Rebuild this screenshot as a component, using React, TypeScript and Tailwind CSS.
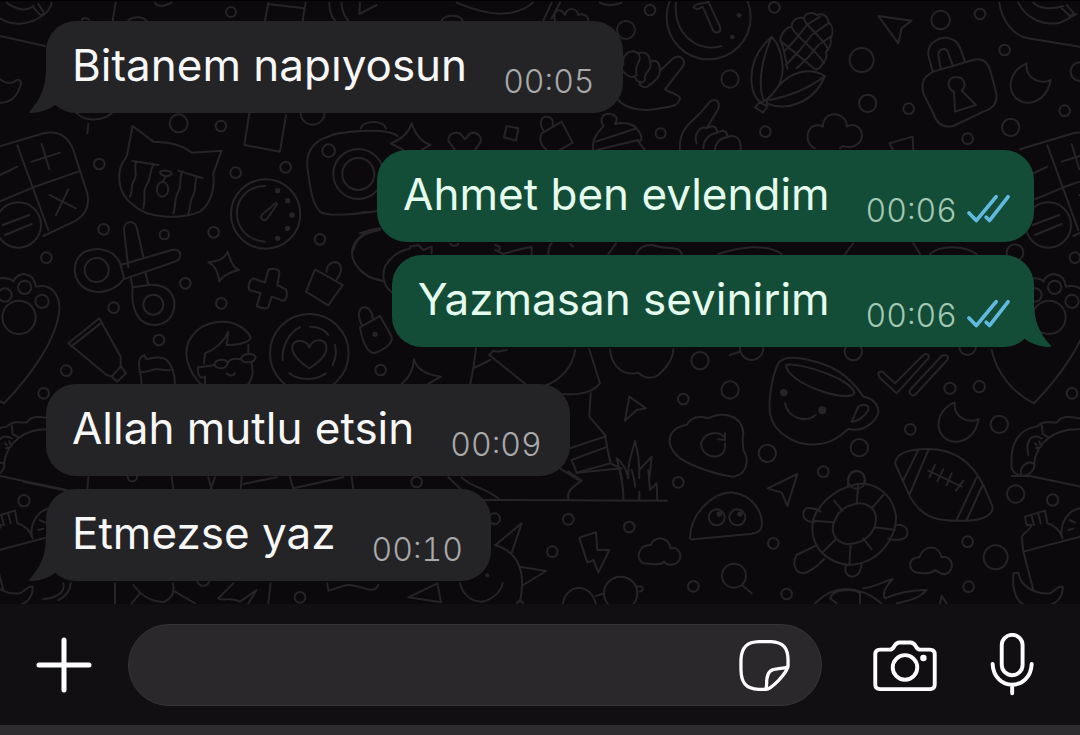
type Message = {
  text: string
  time: string
  mine?: boolean
  tail?: boolean
}

type Circle = [number, number, number]

type Tile = {
  x: number
  y: number
  d: string[]
  rings: Circle[]
  dots?: Circle[]
}

const messages: Message[] = [
  { text: 'Bitanem napıyosun', time: '00:05', tail: true },
  { text: 'Ahmet ben evlendim', time: '00:06', mine: true },
  { text: 'Yazmasan sevinirim', time: '00:06', mine: true, tail: true },
  { text: 'Allah mutlu etsin', time: '00:09' },
  { text: 'Etmezse yaz', time: '00:10', tail: true },
]

export default function App() {
  return (
    <main className="min-h-screen flex flex-col bg-[#0b090c] font-['Inter','Liberation_Sans',sans-serif] text-white">
      <section className="relative flex-1 overflow-hidden border-t border-black">
        <Wallpaper />
        <ul className="relative flex flex-col px-[46px] pt-5 pb-[22px]">
          {messages.map((message, i) => (
            <Bubble key={i} message={message} grouped={i > 0 && messages[i - 1].mine === message.mine} />
          ))}
        </ul>
      </section>
      <Composer />
      <div className="h-2.5 bg-[#2e2c2f]" />
    </main>
  )
}

function Bubble({ message, grouped }: { message: Message; grouped: boolean }) {
  const { text, time, mine, tail } = message
  return (
    <li className={`flex first:mt-0 ${grouped ? 'mt-[13px]' : 'mt-[37px]'} ${mine ? 'justify-end' : 'justify-start'}`}>
      <div
        className={`relative flex items-end rounded-[30px] pl-[26px] ${
          mine ? 'bg-[#144d37] pr-6' : 'bg-[#242427] pr-7'
        }`}
      >
        {tail && <Tail mine={mine} />}
        <p className={`relative pt-3.5 pb-[18px] text-[44px] leading-[60px] ${mine ? 'text-[#e4fbee]' : 'text-[#f7f7f8]'}`}>
          {text}
        </p>
        <time
          className={`ml-9 pb-[11px] text-[32px] leading-10 font-light tabular-nums ${mine ? 'text-[#a3c9b4]' : 'text-[#a9a9ab]'}`}
        >
          {time}
        </time>
        {mine && <ReadTicks />}
      </div>
    </li>
  )
}

function Tail({ mine = false }: { mine?: boolean }) {
  return (
    <svg
      viewBox="0 0 46 44"
      aria-hidden="true"
      className={`absolute bottom-0 h-11 w-[46px] ${
        mine ? '-right-[18px] fill-[#144d37]' : '-left-[18px] -scale-x-100 fill-[#242427]'
      }`}
    >
      <path d="M28 0C28 17 33 30 45 43C45 44 44 44 43 44C34 44 24 40 19 36L0 36L14 0Z" />
    </svg>
  )
}

function ReadTicks() {
  return (
    <svg
      viewBox="0 0 130 90"
      role="img"
      aria-label="Okundu"
      className="mb-[18px] ml-2.5 h-[30px] w-[43px] fill-none stroke-[#62b9de]"
      strokeWidth="11"
      strokeLinecap="round"
      strokeLinejoin="round"
    >
      <path d="M6 57L28 80L88 8M58 70L68 80L124 8" />
    </svg>
  )
}

function Composer() {
  return (
    <form className="flex items-center bg-[#110f12] pt-5 pb-[19px] pl-9 pr-[46px]" onSubmit={(e) => e.preventDefault()}>
      <button type="button" aria-label="Ekle">
        <svg viewBox="0 0 56 56" className="size-14 fill-none stroke-white" strokeWidth="5" strokeLinecap="round">
          <path d="M28 3V53M3 28H53" />
        </svg>
      </button>
      <div className="ml-9 flex h-[82px] min-w-0 flex-1 items-center rounded-full border border-[#363438] bg-[#2a282b] pl-8 pr-[31px]">
        <input
          type="text"
          aria-label="Mesaj"
          className="min-w-0 flex-1 bg-transparent text-[32px] leading-10 text-white outline-none"
        />
        <button type="button" aria-label="Çıkartma" className="ml-4">
          <svg
            viewBox="0 0 156 156"
            className="size-[51px] fill-none stroke-white"
            strokeWidth="10"
            strokeLinecap="round"
            strokeLinejoin="round"
          >
            <path d="M81 151H60C20 149 7 130 6 92V60C8 22 24 6 62 5H98C136 7 150 25 150 62V78C148 100 100 150 81 151Z" />
            <path d="M82 150C86 140 84 130 85 120C88 98 96 90 116 88C128 86 140 88 149 82" />
          </svg>
        </button>
      </div>
      <button type="button" aria-label="Kamera" className="ml-[51px]">
        <svg
          viewBox="0 0 198 156"
          className="h-[51px] w-16 fill-none stroke-white"
          strokeWidth="12"
          strokeLinecap="round"
          strokeLinejoin="round"
        >
          <path d="M22 29H52C60 29 62 24 66 18C71 9 74 7 82 7H116C124 7 127 9 132 18C136 24 138 29 146 29H176C186 29 191 34 191 44V137C191 147 186 151 176 151H22C12 151 7 147 7 137V44C7 34 12 29 22 29Z" />
          <circle cx="99" cy="84" r="38" />
          <circle cx="156" cy="55" r="10" className="fill-white stroke-none" />
        </svg>
      </button>
      <button type="button" aria-label="Sesli mesaj" className="ml-[53px]">
        <svg
          viewBox="0 0 135 195"
          className="h-16 w-11 fill-none stroke-white"
          strokeWidth="12"
          strokeLinecap="round"
        >
          <rect x="36" y="5" width="64" height="124" rx="32" />
          <path d="M8 94C10 136 38 158 68 158C98 158 126 136 128 94M68 158V184" />
        </svg>
      </button>
    </form>
  )
}

// Doodles are drawn on a 3x grid, one tile per patch of the wall
const tiles: Tile[] = [
  {
    x: 0,
    y: 0,
    d: [
      'M0 55C40 80 90 75 130 45C145 35 152 20 155 8M20 8C50 30 80 35 100 18M100 22L118 42C125 48 135 42 130 35L115 12M0 108L135 138',
      'M347 8L338 62M465 8C475 25 495 18 515 8M245 60C250 52 262 52 268 60M385 62C400 48 425 48 440 62',
      'M805 8L795 62M917 8L908 62M805 12L912 25M988 8C988 30 995 50 1005 62M1025 8C1025 30 1035 50 1045 62M1080 8L1078 42L1130 15',
      'M0 238C20 255 40 250 50 240C60 238 65 245 62 255C50 295 25 310 0 308M228 338C255 365 305 365 335 340M265 372L262 400',
      // cat with teary eyes
      'M398 378L460 425C500 425 540 430 575 458L665 452L640 520C645 560 635 610 600 635C540 660 440 655 400 615C350 580 345 510 380 470Z',
      'M398 483L475 495M408 486C400 510 415 520 402 540C390 560 400 575 390 590M460 495C445 520 455 535 440 555C425 575 440 590 430 625M535 512L608 535M545 520C535 545 548 555 535 575C520 600 530 615 520 640M590 532C582 550 590 570 578 590C565 610 575 620 565 640',
      'M480 517C485 508 512 512 515 520C510 532 485 530 480 517ZM497 530L488 545C465 550 465 588 487 590C510 588 510 550 488 545',
      'M748 340L733 435L840 455L858 345',
      'M795 558C685 560 680 715 795 725M828 608L785 645C778 660 795 665 802 655L832 612Z',
      // camera
      'M1192 408C1160 380 1010 395 985 410C940 425 918 455 922 500C930 560 935 610 960 635C980 650 1050 645 1140 632M1082 385C1090 360 1150 360 1158 385',
      'M1060 750C1070 710 1100 690 1140 685',
    ],
    rings: [
      [693, 36, 15], [536, 370, 27], [663, 378, 16], [298, 492, 16], [707, 518, 16], [857, 502, 16],
      [311, 688, 16], [493, 704, 14], [641, 697, 16], [960, 718, 16], [938, 338, 36], [986, 452, 19],
      [797, 642, 104], [1075, 522, 75], [1075, 522, 48],
    ],
    dots: [[833, 572, 8], [863, 602, 8], [876, 645, 8], [863, 685, 8], [833, 715, 8]],
  },
  {
    x: 360,
    y: 0,
    d: [
      'M290 8C340 30 400 45 440 40C480 35 505 20 518 8M245 62C255 42 300 42 308 62M575 8L550 62M600 8L575 55M585 62C578 30 600 20 615 45C625 18 650 25 655 45C670 38 685 50 685 62M720 8C740 20 770 15 785 8',
      'M948 8C940 100 1010 160 1085 138M1000 22C1010 5 1030 15 1045 5L1080 80C1085 98 1065 105 1058 88L1028 20L1012 28Z',
      // hand calling
      'M790 195C785 160 815 145 835 160C860 150 870 170 870 185C895 175 900 195 900 212L940 175C960 160 980 180 968 200L915 268C935 280 960 285 960 295C955 320 930 320 900 325C860 335 800 330 775 300M835 160C850 185 820 190 830 225C815 240 800 225 790 215M870 185C880 210 850 215 855 240C845 255 830 245 825 232M900 212C900 240 870 250 860 262C845 262 835 255 840 245',
      'M960 450C955 390 990 370 1020 340L1050 305C1072 290 1085 312 1070 335L1040 385C1060 370 1075 385 1070 400C1090 385 1105 395 1100 412C1130 400 1145 420 1142 450M1010 430C1000 405 1020 375 1040 385M1030 445C1030 420 1050 400 1070 400M1065 450C1065 430 1080 415 1100 412',
      'M155 370C165 400 180 425 212 435L185 450M155 370C145 400 120 420 92 430L130 450',
      'M285 450L265 422C265 400 285 395 300 400L315 418L330 400C350 392 365 410 362 425L345 450',
      'M440 378L475 385L468 422L432 412Z',
      'M545 400L605 365L638 428L600 450M545 400C535 420 545 440 560 450M550 390C535 370 545 348 562 350C578 352 580 365 578 378',
      'M700 450C695 420 710 400 730 380C715 350 735 335 760 345C780 355 765 368 765 372C795 365 825 370 840 400C850 420 840 430 835 420L710 450M708 425L830 385M835 425L855 450',
      'M0 700C30 690 45 685 50 690M0 638L20 635',
    ],
    rings: [[798, 90, 27], [870, 30, 16], [1110, 237, 26], [902, 400, 15], [1046, 52, 126]],
    dots: [[1137, 46, 7], [1117, 111, 7]],
  },
  {
    x: 700,
    y: 0,
    d: [
      // corn
      'M215 110C170 150 150 200 155 250C158 280 170 300 185 308C230 280 250 240 248 200C245 160 235 130 215 110ZM200 310C260 335 340 310 375 228C330 200 270 215 235 260C215 285 200 295 200 310M210 300C260 290 320 270 375 228M215 110C190 170 170 240 190 300M178 308L165 322L190 338L203 318Z',
      'M240 120C245 95 262 80 275 80C275 60 295 50 312 55C315 38 340 35 350 45C370 38 385 50 385 65C400 80 400 100 392 115C395 135 385 150 378 155C385 175 370 190 365 195C360 205 350 210 345 208M240 120C250 135 255 165 262 205M245 125L345 208M275 80C280 105 350 150 372 190M312 55C315 80 370 110 385 150M252 155L285 120L320 75L360 50M258 195L300 150L335 105L385 70M290 205L322 175L355 135L392 110',
      'M535 48L635 62L605 85L595 130Z',
      // padlock
      'M698 215L685 165C680 125 725 105 755 118C780 125 785 160 795 185M722 205L715 165C715 145 740 140 745 160L758 195M700 215L820 180C850 172 865 190 872 215L888 275C895 305 880 325 850 335L760 378C730 385 710 370 700 340L670 280C660 240 680 225 700 215ZM762 275C735 260 745 230 770 232C795 232 800 260 785 272L828 315L765 335Z',
      'M345 445C320 435 315 400 335 382C350 370 365 378 368 380C370 345 400 335 425 350C440 360 440 370 440 380C470 365 490 390 485 415C480 435 455 445 435 440C430 435 425 440 420 445',
      'M580 450L568 430L638 410L640 450',
      'M898 8C905 60 940 108 985 115L1140 140M955 8C975 50 1025 80 1080 68C1100 60 1115 50 1130 42M1000 8C1015 25 1055 30 1090 18M1085 25L1110 48L1122 40L1100 15',
    ],
    rings: [
      [223, 22, 16], [722, 60, 28], [840, 42, 16], [485, 180, 36], [503, 310, 26], [626, 326, 16],
      [196, 395, 16], [803, 416, 16], [914, 150, 16], [932, 382, 26], [1094, 332, 16], [1140, 215, 28],
    ],
  },
  {
    x: 0,
    y: 230,
    d: [
      // scissors
      'M385 112L372 0C372 -32 408 -32 412 0L430 80M362 105L515 60C545 55 550 85 525 95L370 148C350 180 300 195 265 180C215 160 210 90 255 65C300 45 350 65 362 105L372 145M392 142L398 172C395 200 398 240 420 268C450 295 500 290 518 250C535 205 510 160 445 165L398 172M445 163L436 128',
      'M683 65C690 90 700 115 717 120C690 125 665 140 658 155C655 130 645 105 625 97C650 95 675 85 683 65Z',
      'M805 120C820 112 840 118 838 130L832 165L858 178C865 195 858 212 848 212L815 200L805 232C792 240 778 232 770 228L782 190L748 180C742 165 750 150 760 145L795 158Z',
      'M945 118L1028 165L985 226L918 185ZM980 125C980 95 1010 90 1020 105C1028 120 1020 135 1010 148',
      'M1140 0C1080 10 1045 40 1060 90C1080 130 1110 145 1140 150',
      'M298 265L205 340L320 435L335 440L362 410V380ZM213 350L305 278M335 440L352 455L378 430L362 408',
      'M425 465C425 430 410 410 420 385L432 375L440 388C460 380 490 380 500 390C520 410 525 440 525 465M420 425C440 430 450 420 465 418C490 415 500 425 510 420',
      // face with glasses
      'M605 465C560 420 545 360 575 320C610 270 690 260 735 300C755 320 755 325 748 330C730 345 700 345 680 345L685 305C670 340 640 360 615 370L612 400M745 345V370M755 398L758 430C755 450 745 465 740 465M595 410C590 430 600 450 615 440V465M683 398C690 385 710 385 722 388M645 405L598 412M680 430C690 440 700 438 705 430M643 402C650 385 680 385 683 400C680 418 648 420 643 402ZM723 386C728 368 762 368 767 382C764 400 728 402 723 386Z',
      'M928 415C895 395 870 365 878 345C890 325 920 330 928 352C940 325 970 325 978 345C985 370 960 395 928 415ZM848 390C845 345 870 305 900 292M930 290C955 290 975 300 985 315M1005 345C1012 370 1005 390 998 405M868 430C900 455 950 450 978 430',
    ],
    rings: [
      [139, 83, 16], [341, 233, 16], [556, 160, 16], [664, 220, 16], [477, 330, 16], [199, 422, 16],
      [131, 490, 16], [290, 120, 36], [460, 224, 30], [928, 370, 118],
    ],
  },
  {
    x: 360,
    y: 230,
    d: [
      'M0 292L60 258L95 320C100 345 60 365 42 370C15 365 5 320 0 292M5 285C-15 240 5 225 25 235C35 245 38 255 38 268',
      'M100 190C60 165 60 110 100 80C120 60 140 60 150 55M0 120C30 150 60 150 75 155M150 50L175 45L190 60L215 50V70M270 42C280 50 290 48 295 42M405 45C430 50 420 65 405 60L430 72L470 60L515 50V72M565 72C565 55 570 45 575 40M630 42L640 50M745 72L768 40M830 72C835 55 850 45 880 45C910 60 960 45 965 72',
      'M348 355L340 415L330 465M340 415L390 390M388 375L500 465M560 465C600 450 640 410 645 360M388 375L400 362C410 370 430 360 440 360M688 358L720 460C695 490 650 495 610 492M692 490L688 560L738 618M630 655L735 620L742 650L635 690M742 655L752 700L650 728L635 690M600 715L655 750M755 702L778 712L785 750',
      'M750 358C755 410 790 440 835 428C860 450 880 445 895 435C925 410 940 380 940 358',
      'M162 388C170 420 205 435 243 440L205 462M162 388C160 420 145 445 125 462',
      'M808 500L858 535L830 540L795 572Z',
      'M785 745L770 685C790 700 800 720 805 745C800 700 820 660 825 632C835 670 840 700 838 745M838 720L875 680L868 745',
    ],
    rings: [[1020, 392, 26], [970, 507, 16], [62, 420, 16]],
    dots: [[45, 313, 8]],
  },
  {
    x: 700,
    y: 230,
    d: [
      'M55 72C120 50 200 40 245 72M435 72L460 40M640 40L660 72M690 72C720 45 790 45 830 72M90 375L120 365',
      // smiling cup
      'M235 400C215 440 205 510 210 550C220 610 290 650 350 643C400 640 430 610 445 597C500 610 540 560 535 540C530 510 500 500 490 500C450 440 400 400 300 385C265 380 245 385 235 400ZM258 405C300 395 460 450 463 490C440 520 260 460 258 405ZM475 530C490 520 510 525 505 540C495 560 470 575 455 575ZM255 520C265 565 315 580 347 555',
      'M535 430C540 420 550 425 555 432L585 460L670 375C680 368 690 375 685 385L590 490L538 442ZM630 480L725 378C740 370 748 380 742 390L645 495C635 500 625 490 630 480Z',
      'M-60 685C-115 640 -90 590 -40 585C-30 565 -10 555 25 565C60 545 125 550 130 610C125 630 130 645 130 660C150 690 140 735 100 740C50 735 -20 710 -60 685ZM72 620C50 600 10 610 3 640C5 680 50 690 70 668C78 655 75 645 75 640M55 628L75 630V610',
    ],
    rings: [
      [945, 68, 25], [1125, 83, 16], [90, 480, 26], [460, 365, 26], [155, 355, 35], [750, 475, 17], [838, 470, 17],
      [1116, 490, 16], [631, 598, 16], [898, 583, 26], [478, 653, 26], [202, 670, 26], [470, 750, 26], [803, 350, 25],
    ],
    dots: [[251, 488, 11], [367, 541, 12]],
  },
  {
    x: 0,
    y: 470,
    d: [
      'M265 22L262 60M515 20L520 58M625 22L635 58M645 22L632 58M725 20L722 58M730 42L830 22M870 20L880 58M880 55L1030 22M1055 20L1060 58M70 35L200 62',
      'M345 340V400M190 340C195 360 185 380 130 388M212 340C210 365 195 380 175 390M400 345C430 385 470 400 495 395C520 380 525 360 518 340M420 370L395 400M525 365L585 400M700 340L655 385C665 395 690 380 720 395L770 360L745 400M812 340L805 400M982 340L985 362L1040 345C1080 340 1120 380 1135 345',
    ],
    rings: [[72, 92, 17], [397, 20, 14], [900, 382, 16], [610, 330, 18]],
  },
  {
    x: 360,
    y: 470,
    d: [
      'M265 22L305 60M305 22C330 50 370 50 415 85M345 90L920 92M625 88C620 60 640 50 665 32L625 5M650 8L785 -5M790 90C792 60 785 30 780 0M815 0C820 20 825 30 825 50M838 65V90M865 0L870 60L890 40L892 90',
      // sun
      'M405 225C470 245 500 300 480 395M410 222L485 160L455 248M480 290L558 303L490 345M300 340C310 380 340 395 365 395C400 390 425 360 428 340M232 340L145 382L243 397L232 340M470 400L480 390L490 400',
      'M658 203L708 187L712 240L748 240L715 308L700 270L682 278Z',
      'M850 280C825 265 835 225 872 225C885 195 925 200 932 235C955 230 970 255 955 275C940 290 920 285 912 275C900 290 870 280 850 280Z',
      'M608 405C615 340 695 335 708 405M708 378L732 370M832 350C850 345 855 360 840 365',
    ],
    rings: [
      [170, 36, 16], [404, 146, 16], [625, 148, 16], [955, 37, 16], [808, 171, 16], [577, 245, 16],
      [1000, 349, 16], [782, 370, 50],
    ],
    dots: [[382, 316, 6]],
  },
  {
    x: 700,
    y: 470,
    d: [
      'M-30 205C-30 130 40 65 100 68C160 75 190 130 185 170C180 190 160 190 150 192L-20 208C-27 209 -30 206 -30 205Z',
      'M292 12L203 55L245 68L262 108Z',
      // turtle
      'M460 45C520 30 580 70 588 140C590 200 540 280 450 285C380 280 330 230 338 160C345 110 400 60 460 45ZM455 105C490 90 530 110 528 150C525 190 490 225 440 222C400 215 390 180 405 150C415 125 435 110 455 105ZM475 45L470 100M402 92L428 122M340 152L400 157M370 245L405 210M448 285L452 222M515 238L490 205M585 180L525 172M550 75L515 115',
      'M445 50C440 15 455 0 475 3C495 10 497 30 490 45M345 155C310 160 300 125 320 115C340 110 355 120 362 125M585 165C610 160 625 175 622 190C620 210 590 215 565 205M438 285C430 310 445 320 458 320C475 318 485 300 485 280M345 228L290 255C275 280 285 310 310 310C330 308 350 290 372 268',
      // football
      'M585 -20C590 -50 620 -62 680 -63C760 -65 815 -25 850 45L878 110C880 135 850 150 800 152C720 155 670 150 630 80ZM628 75L685 -60M608 35L655 -60M770 150L830 22M800 150L848 45M685 2L785 50M705 -15L688 22M730 -2L712 34M755 10L740 45M790 32L768 62',
      'M650 308C620 300 625 260 658 262C670 225 715 220 725 262C755 255 765 290 745 308C730 320 715 305 705 300C690 315 665 310 650 308Z',
      'M126 345L155 370',
      'M345 400C400 345 470 340 545 400M410 400L390 385C400 355 460 355 480 370V400M490 355C530 350 560 330 578 328C560 345 545 370 555 385C590 370 640 360 680 360C660 385 620 395 590 400M720 400L725 378L740 400',
    ],
    rings: [
      [370, 5, 16], [220, 220, 16], [260, 372, 16], [803, 215, 16], [887, 262, 36], [947, 72, 26], [1058, 90, 17],
      [806, 350, 16], [102, 317, 36], [50, 142, 24], [112, 142, 24],
    ],
    dots: [[58, 132, 8], [120, 132, 8]],
  },
]

const calculator =
  'M-30 448L130 400C175 390 205 410 220 450L262 580C270 620 255 650 215 668L130 708M52 436L145 690M-30 617L100 562L235 515M0 525L52 500M95 485L180 458M125 432L148 508M148 585L228 625M205 568L168 645M8 675L88 645M15 705L95 672M-13 675A68 68 0 1 0 123 675A68 68 0 1 0 -13 675'
const pawHeart =
  'M-20 150C0 140 35 145 40 155C50 125 100 120 108 170C160 160 180 200 178 240C170 330 90 440 12 520C-50 490 -100 430 -115 360M54 172A20 20 0 1 0 94 172A20 20 0 1 0 54 172M106 214A20 20 0 1 0 146 214A20 20 0 1 0 106 214M-5 195A20 20 0 1 0 35 195A20 20 0 1 0 -5 195M7 262A50 50 0 1 0 107 262A50 50 0 1 0 7 262'
const taco =
  'M-55 700C-60 640 -30 595 20 590C40 570 65 578 80 578C95 555 120 560 150 565M12 700C20 640 70 595 150 598M35 582L38 612L55 622M12 700C18 715 0 735 -20 738C-45 735 -60 720 -55 700M-5 675C-15 630 5 610 35 625M-25 735C-35 715 -10 690 8 700M15 640L20 645M28 634L30 642M18 655L24 652M-55 738L0 738L200 780'
const bottle =
  'M-20 245L-25 200C-15 185 0 180 5 165L-10 165L-15 140L45 122L52 160C70 165 90 180 98 205M-20 245L150 200M-20 245L10 360M5 138L12 165M25 132L32 160M95 200C90 150 120 120 150 115M115 180L130 176M118 150L135 158M-50 310C-55 380 -30 400 -15 405M-50 310L-35 308C-30 345 10 375 60 370C80 360 85 345 98 350C100 380 80 400 60 405'
const moon = 'M980 190C920 215 915 290 970 307C1010 315 1045 285 1052 240C1030 255 975 240 980 190Z'

function Wallpaper() {
  return (
    <svg
      viewBox="0 1 1080 603"
      preserveAspectRatio="xMidYMid slice"
      aria-hidden="true"
      className="absolute inset-0 h-full w-full fill-none stroke-[#262427]"
      strokeWidth="6"
      strokeLinejoin="round"
      strokeLinecap="round"
    >
      {tiles.map((tile) => (
        <g key={`${tile.x}-${tile.y}`} transform={`translate(${tile.x} ${tile.y}) scale(0.3333)`}>
          {tile.d.map((d) => (
            <path key={d} d={d} />
          ))}
          {tile.rings.map(([cx, cy, r]) => (
            <circle key={`${cx}-${cy}-${r}`} cx={cx} cy={cy} r={r} />
          ))}
          {tile.dots?.map(([cx, cy, r]) => (
            <circle key={`${cx}-${cy}-${r}`} cx={cx} cy={cy} r={r} className="fill-[#262427] stroke-none" />
          ))}
        </g>
      ))}
      {[0, 1030].map((x) => (
        <g key={x} transform={`translate(${x} 0) scale(0.3333)`}>
          <path d={calculator} />
          <path d={pawHeart} transform="translate(0 690)" />
          <path d={taco} transform="translate(0 690)" />
          <path d={bottle} transform="translate(0 1410)" />
        </g>
      ))}
      <path d={moon} transform="translate(700 0) scale(0.3333)" />
      <path d={moon} transform="translate(628 339) scale(0.3333)" />
    </svg>
  )
}
